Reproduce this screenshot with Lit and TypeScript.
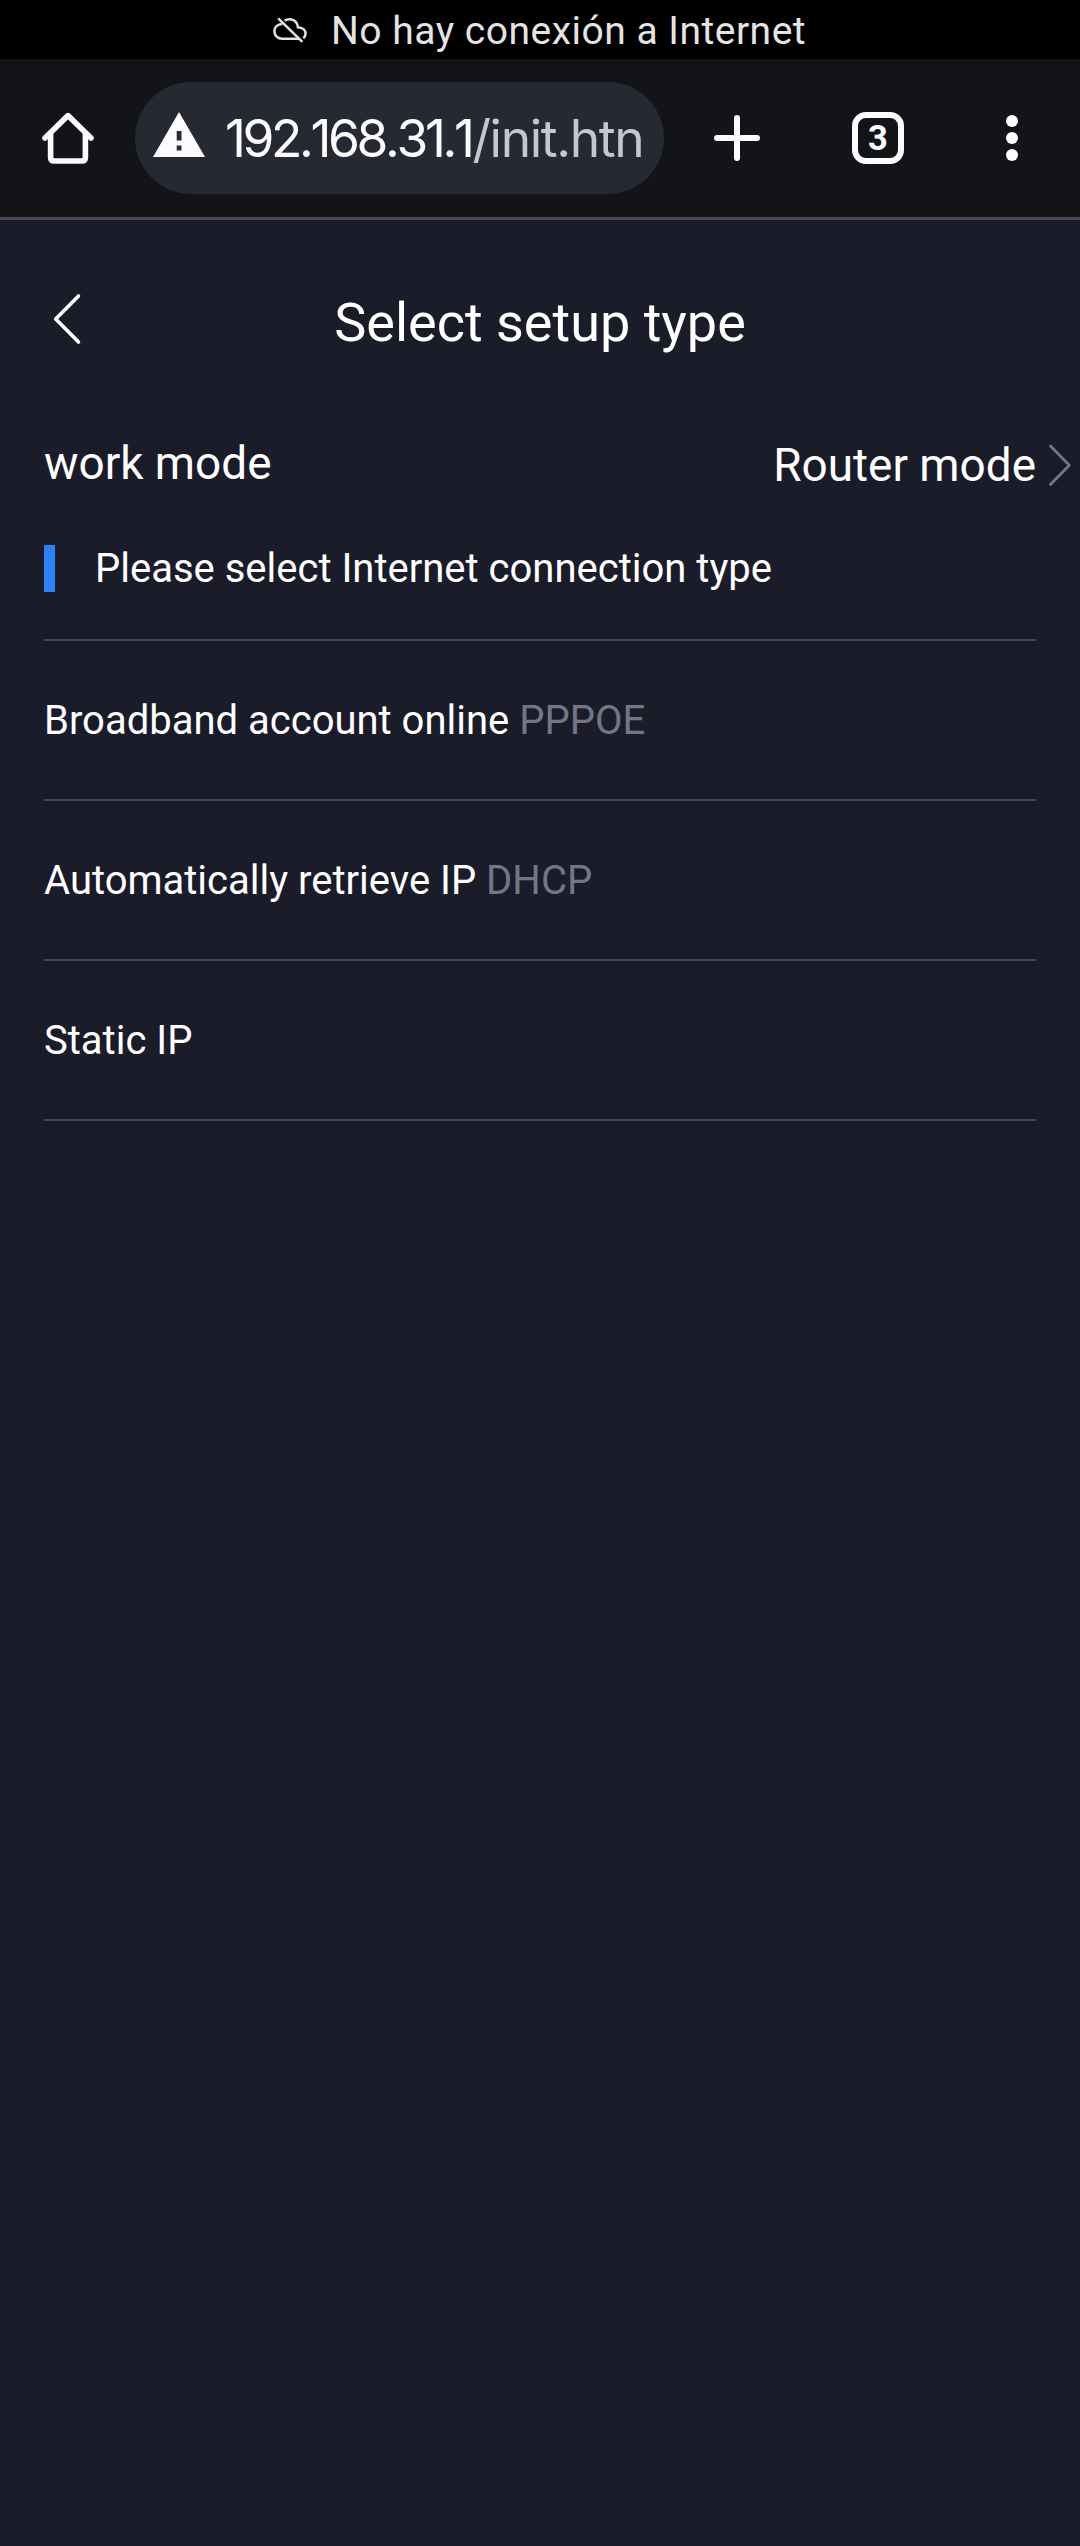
import { LitElement, html, css } from "lit";
import { customElement } from "lit/decorators.js";

interface Connection {
  name: string;
  tag?: string;
}

const CONNECTIONS: Connection[] = [
  { name: "Broadband account online", tag: "PPPOE" },
  { name: "Automatically retrieve IP", tag: "DHCP" },
  { name: "Static IP" },
];

@customElement("status-strip")
class StatusStrip extends LitElement {
  static styles = css`
    :host {
      display: flex;
      align-items: center;
      height: 59px;
      padding-left: 270px;
      background: #000;
      color: #e4e4e4;
    }
    .cloud {
      width: 40px;
      height: 34px;
      margin: 3px 21px 0 0;
      flex: none;
    }
    .label {
      padding-top: 4px;
      font: 400 39px/55px Roboto, sans-serif;
      letter-spacing: 0.5px;
      white-space: nowrap;
    }
  `;
  render() {
    return html`
      <svg class="cloud" viewBox="0 0 40 34" fill="none" stroke="currentColor" stroke-width="2.5">
        <path d="M12.2 10C7.5 10.2 4.4 13.2 4.4 17.2C4.4 21.6 7.8 24.8 12.2 24.8H29" />
        <path d="M14.6 6.6C16.2 5.5 18.4 5 20.4 5.2C24.6 5.7 27.4 8.8 27.9 13.2C32.6 13.4 35.6 16 35.6 19.6C35.6 21.6 34.8 23 33.3 24.2" />
        <path d="M8.2 4.4L32.4 27.8" />
      </svg>
      <span class="label">No hay conexión a Internet</span>
    `;
  }
}

@customElement("browser-bar")
class BrowserBar extends LitElement {
  static styles = css`
    :host {
      display: flex;
      align-items: center;
      box-sizing: border-box;
      height: 161px;
      padding-left: 42px;
      border-bottom: 3px solid #484952;
      background: #131418;
      color: #fcfbff;
    }
    svg {
      flex: none;
    }
    .address {
      display: flex;
      align-items: center;
      box-sizing: border-box;
      width: 529px;
      height: 112px;
      margin: 0 50px 0 41px;
      padding: 0 23px 0 18px;
      border-radius: 56px;
      background: #272932;
    }
    .warning {
      margin-bottom: 6px;
    }
    .url {
      flex: 1;
      margin-left: 20px;
      overflow: hidden;
      white-space: nowrap;
      font: 400 51.5px/80px Inter, sans-serif;
      font-kerning: none;
      letter-spacing: -3.4px;
    }
    .path {
      margin-left: 1px;
      color: #c5c6d4;
      letter-spacing: -1.4px;
    }
    .tabs {
      display: flex;
      align-items: center;
      justify-content: center;
      box-sizing: border-box;
      width: 52px;
      height: 52px;
      margin: 0 102px 0 92px;
      padding-top: 1px;
      border: 6px solid currentColor;
      border-radius: 14px;
      font: 700 34.5px/39px Roboto, sans-serif;
    }
  `;
  render() {
    return html`
      <svg width="52" height="52" viewBox="0 0 52 52" fill="none" stroke="currentColor" stroke-width="5.6" stroke-linejoin="round" stroke-linecap="round">
        <path d="M3 26L26 3.6L49 26" />
        <path d="M8.6 22V45.4Q8.6 49 12.2 49H39.8Q43.4 49 43.4 45.4V22" />
      </svg>
      <div class="address">
        <svg class="warning" width="52" height="46" viewBox="0 0 52 46">
          <path fill="currentColor" fill-rule="evenodd" d="M26 0L52 45H0ZM23.7 19V28.5H28.5V19ZM23.7 33.5V38.5H28.5V33.5Z" />
        </svg>
        <div class="url">192.168.31.1<span class="path">/init.htn</span></div>
      </div>
      <svg width="46" height="48" viewBox="0 0 46 48" fill="none" stroke="currentColor" stroke-width="6" stroke-linecap="round">
        <path d="M23 4V44M3 24H43" />
      </svg>
      <div class="tabs">3</div>
      <svg width="12" height="48" viewBox="0 0 12 48" fill="currentColor">
        <circle cx="6" cy="7" r="6" />
        <circle cx="6" cy="24" r="6" />
        <circle cx="6" cy="41" r="6" />
      </svg>
    `;
  }
}

@customElement("app-root")
class AppRoot extends LitElement {
  static styles = css`
    :host {
      display: flex;
      flex-direction: column;
      min-height: 2546px;
      background: #1b1c2a;
      color: #fff;
      font-family: Roboto, sans-serif;
    }
    .header {
      display: grid;
      grid-template-columns: 100px 1fr 100px;
      align-items: center;
      height: 205px;
    }
    .back {
      margin: 0 0 8px 51px;
    }
    .title {
      margin: 0;
      text-align: center;
      font-size: 54px;
      font-weight: 400;
      line-height: 70px;
    }
    .mode {
      display: flex;
      align-items: center;
      height: 80px;
      padding: 0 8px 0 44px;
      font-size: 45.9px;
      line-height: 60px;
    }
    .mode-name {
      flex: 1;
      margin-bottom: 4px;
    }
    .next {
      margin-left: 11px;
    }
    .prompt {
      display: flex;
      align-items: center;
      gap: 40px;
      height: 47px;
      margin: 40px 44px 47px;
      font-size: 40px;
    }
    .marker {
      width: 11px;
      height: 47px;
      background: #2b80fb;
    }
    .list {
      margin: 0 44px;
      padding: 0;
      list-style: none;
      border-top: 2px solid #444652;
    }
    .item {
      height: 158px;
      border-bottom: 2px solid #444652;
      font-size: 40px;
      line-height: 160px;
    }
    .tag {
      color: #747683;
    }
  `;
  render() {
    return html`
      <status-strip></status-strip>
      <browser-bar></browser-bar>
      <header class="header">
        <svg class="back" width="32" height="54" viewBox="0 0 32 54" fill="none" stroke="#fff" stroke-width="3.6" stroke-linecap="round" stroke-linejoin="round">
          <path d="M27.5 4L4.7 27L27.5 50" />
        </svg>
        <h1 class="title">Select setup type</h1>
      </header>
      <div class="mode">
        <span class="mode-name">work mode</span>
        <span>Router mode</span>
        <svg class="next" width="25" height="46" viewBox="0 0 25 46" fill="none" stroke="#747683" stroke-width="2.8" stroke-linecap="round" stroke-linejoin="round">
          <path d="M3.5 4L22.3 23.3L3.5 42.6" />
        </svg>
      </div>
      <div class="prompt">
        <span class="marker"></span>
        <span>Please select Internet connection type</span>
      </div>
      <ul class="list">
        ${CONNECTIONS.map(
          (c) => html`<li class="item">${c.name}${c.tag ? html` <span class="tag">${c.tag}</span>` : ""}</li>`
        )}
      </ul>
    `;
  }
}
